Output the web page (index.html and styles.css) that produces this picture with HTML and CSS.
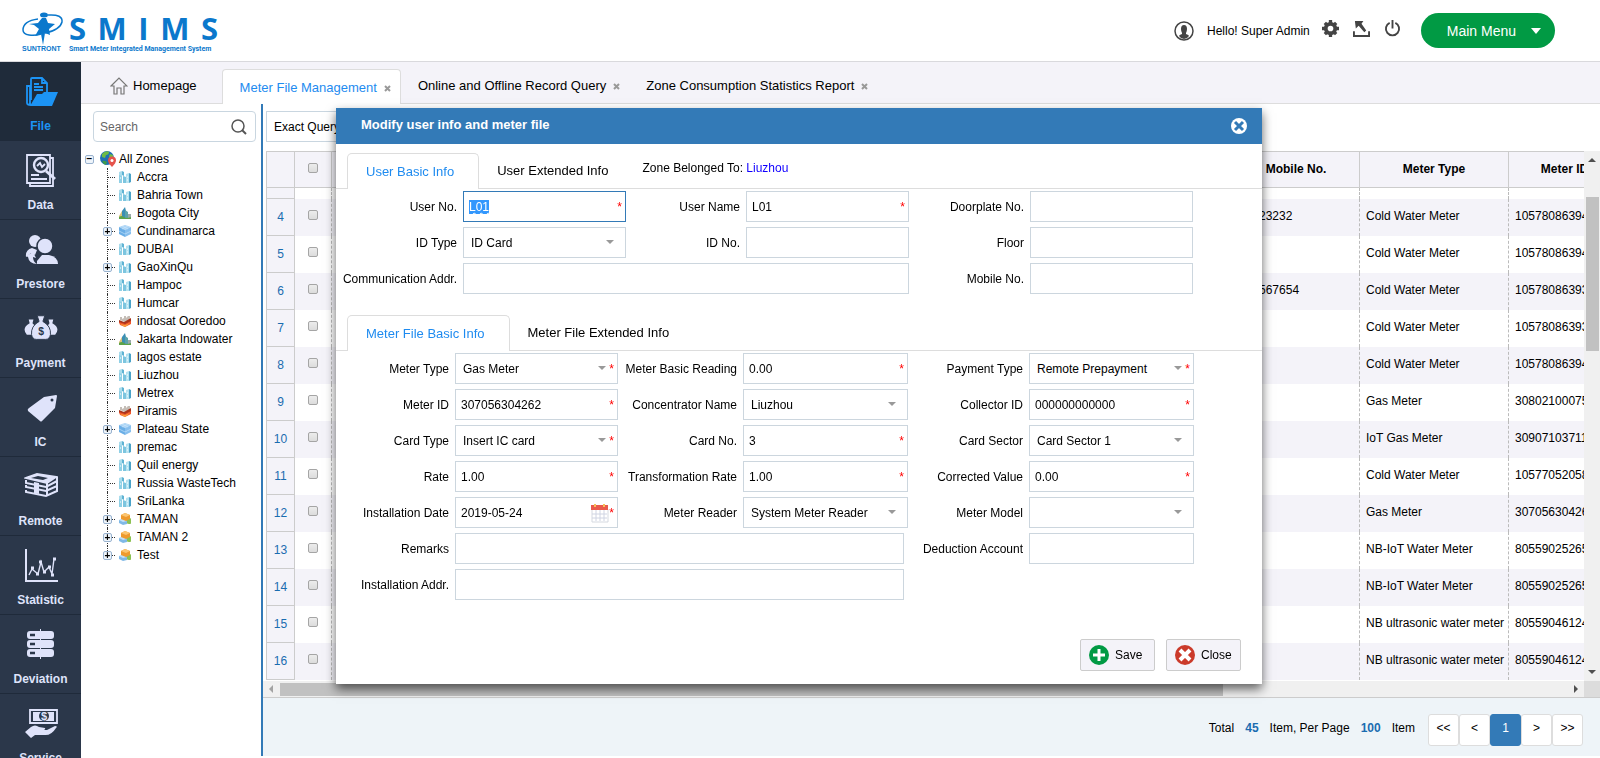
FILE: index.html
```
<!DOCTYPE html>
<html lang="en">
<head>
  <meta charset="UTF-8" />
  <meta name="viewport" content="width=device-width, initial-scale=1" />
  <title>SMIMS - Smart Meter Integrated Management System</title>
  <link rel="stylesheet" href="styles.css">
</head>
<body>

<!-- icon sprite -->
<svg class="sprite" aria-hidden="true">
  <symbol id="i-building" viewBox="0 0 12 12">
    <path d="M0 1l3-1v11l-3 1z" fill="#a9dcec"/><path d="M3 0l2 1v4l-2-1z" fill="#5fb3d3"/>
    <path d="M4 5l3 1v6H4z" fill="#7cc5df"/><path d="M7 3l3-1v10H7z" fill="#b5e2f0"/><path d="M10 2l2 1v8l-2 1z" fill="#4ba3c9"/>
    <path d="M0 4l3 1v7H0z" fill="#8fd0e6"/><path d="M1 7h1M8 6h1M8 9h1" stroke="#fff"/>
  </symbol>
  <symbol id="i-city" viewBox="0 0 12 12">
    <path d="M0 9l3-5 2 7H0z" fill="#d9c27a"/><path d="M3 11V4l3-4 1 4v7z" fill="#3c8fb5"/><path d="M6 11V3l3 2v6z" fill="#5ba3a9"/>
    <path d="M9 7h3v4H9z" fill="#9aa9a9"/><path d="M0 10q3-2 5 0t7 0v2H0z" fill="#5da348"/>
  </symbol>
  <symbol id="i-cube" viewBox="0 0 12 12">
    <path d="M6 0l6 2-6 3-6-3z" fill="#a9d3f5"/><path d="M0 2l6 3v7L0 9z" fill="#6aaee6"/><path d="M12 2L6 5v7l6-3z" fill="#87bfee"/>
    <path d="M3 1l6 3M9 1L3 4M0 6l6 3 6-3" stroke="#cfe7fb" stroke-width=".6" fill="none"/>
  </symbol>
  <symbol id="i-ship" viewBox="0 0 12 12">
    <path d="M1 5V2h2v2l2-1V1h2v2l2-2h2v4L6 7z" fill="#c4bdb6"/><path d="M0 5l5 2 7-4v4l-6 3-6-2z" fill="#a8341c"/>
    <path d="M0 7l6 2 6-3v3l-6 3-5-2z" fill="#f0562a"/><path d="M1 9l5 1 5-2-5 4z" fill="#f7a53c"/>
  </symbol>
  <symbol id="i-group" viewBox="0 0 12 12">
    <circle cx="10" cy="8" r="3" fill="#8cc152"/><path d="M0 7l4-1 4 2v3l-4 1-4-2z" fill="#7fb8e6"/><path d="M0 7l4-1 4 2-4 1z" fill="#c5e1f7"/>
    <path d="M6 0l5 2v4L7 8 2 6V2z" fill="#ee9a2e"/><path d="M6 0l5 2-4 2-5-2z" fill="#fbc570"/>
  </symbol>
  <symbol id="i-globe" viewBox="0 0 16 16">
    <circle cx="7" cy="7" r="7" fill="#1f6fb5"/><path d="M2 3Q6-1 9 1q0 3-3 3l-1 3-3-1z" fill="#6dbb45"/><path d="M10 3l3 1v3l-3 1-1-3z" fill="#6dbb45"/>
    <path d="M2 10q3-1 5 1l-1 3q-3-1-4-4z" fill="#3f9b4c"/>
    <path d="M12 16q-4-4-4-6.500a4 4 0 018 0Q16 12 12 16z" fill="#e5534b"/><circle cx="12" cy="9.500" r="1.500" fill="#fff"/>
  </symbol>
</svg>

<header class="topbar">
  <a class="logo" href="#">
    <span class="brand">
      <svg viewBox="0 0 42 33" fill="#0b78cc" aria-hidden="true">
        <path d="M16 7Q1 9 1 18q0 4 6 5 6 1 12-1M23 21q15-3 17-11 1-8-14-7" fill="none" stroke="#0b78cc" stroke-width="1.500"/>
        <ellipse cx="22" cy="3" rx="4" ry="2.500"/>
        <path d="M20 6h4l2 5 7 1-6 5 1 6-5-2-2 12-2-11-6 2 4-7-5-4-5-1 9-1z"/>
      </svg>
      <span class="company">SUNTRONT</span>
    </span>
    <span class="product">
      <span class="letters"><span>S</span><span>M</span><span>I</span><span>M</span><span>S</span></span>
      <span class="tagline">Smart Meter Integrated Management System</span>
    </span>
  </a>
  <div class="user">
    <svg class="avatar" viewBox="0 0 20 20" aria-hidden="true">
      <circle cx="10" cy="10" r="9" fill="none" stroke="#444" stroke-width="1.500"/>
      <path d="M10 4q3 0 3 4 0 2-1 4v1q3 1 3 2-2 3-5 3t-5-3q0-1 3-2v-1Q7 10 7 8q0-4 3-4z" fill="#444"/>
    </svg>
    <span class="hello">Hello! Super Admin</span>
    <button class="tool" aria-label="Settings">
      <svg viewBox="0 0 18 18"><circle cx="9" cy="9" r="5" fill="none" stroke="#444" stroke-width="4"/><path d="M9 0v4M9 14v4M0 9h4M14 9h4M3 3l2 2M13 13l2 2M15 3l-2 2M5 13l-2 2" stroke="#444" stroke-width="3.500"/></svg>
    </button>
    <button class="tool" aria-label="Export">
      <svg viewBox="0 0 18 18"><path d="M1 12v5h16v-5" fill="none" stroke="#444" stroke-width="2"/><path d="M2 1h9L9 4l5 7-2 2-6-7-3 3z" fill="#444"/></svg>
    </button>
    <button class="tool" aria-label="Log out">
      <svg viewBox="0 0 18 18"><path d="M6 3a7 7 0 106 0M9 0v9" fill="none" stroke="#444" stroke-width="2"/></svg>
    </button>
    <button class="main-menu">Main Menu <span class="caret"></span></button>
  </div>
</header>

<div class="main">
  <nav class="sidebar">
    <a class="item active" href="#">
      <svg viewBox="0 0 34 34"><path d="M6 29V11H3v17q0 2 4 2M7 25V4q0-1 1-1h10l5 5v9M18 3v5h5M10 9h5M10 12h9M10 15h9" fill="none" stroke="#1c94f5" stroke-width="1.800"/><path d="M13 19h5l2-2h14l-6 14H6z" fill="#1c94f5"/></svg>
      File
    </a>
    <a class="item" href="#">
      <svg viewBox="0 0 34 34" fill="none" stroke="#dfe3fa" stroke-width="1.800"><path d="M3 1h23v28H3zM26 4h3v28H6v-3M7 21h8M7 25h16"/><circle cx="17" cy="11" r="7" stroke-width="2.400"/><path d="M22 17l9 8" stroke-width="3"/><path d="M13 12l3-3 2 4 3-3"/></svg>
      Data
    </a>
    <a class="item" href="#">
      <svg viewBox="0 0 34 34" fill="#dfe3fa"><circle cx="11" cy="8" r="6"/><path d="M2 24q-1-7 6-9l5 2-2 5-4-2z"/><circle cx="21" cy="13" r="8" stroke="#2b374a" stroke-width="1.500"/><path d="M13 31v-3l5-6h7q9 2 9 9z"/><path d="M2 23l7-4 3 6-3-1q0 5 4 7-8 0-9-7z"/></svg>
      Prestore
    </a>
    <a class="item" href="#">
      <svg viewBox="0 0 36 34" fill="#dfe3fa"><path d="M5 7h5l-1 4q5 4 4 12H3q-6-7 3-12zM26 7h5l-1 4q9 5 3 12h-9q-1-8 3-12z"/><path d="M14 3h8l-2 6q9 5 8 14-1 5-5 5H13q-4 0-5-5-1-9 8-14z" stroke="#2b374a"/><text x="15" y="23" class="coin">$</text></svg>
      Payment
    </a>
    <a class="item" href="#">
      <svg viewBox="0 0 34 34" fill="#dfe3fa"><path d="M5 17L20 6l12-2q1 0 1 1l-2 12-13 13q-1 1-2 0L4 20q-1-2 1-3z"/><circle cx="28" cy="9" r="1.500" fill="#2b374a"/></svg>
      IC
    </a>
    <a class="item" href="#">
      <svg viewBox="0 0 34 34" fill="none" stroke="#dfe3fa" stroke-width="2"><path d="M2 8l11-4 19 3-9 6z" fill="#dfe3fa"/><path d="M2 10v3l20 4 11-6M2 15v2l20 4 11-5M2 20v2l20 4 11-5V7M23 13v13"/><path d="M7 8l7-2 10 2-5 2z" fill="#2b374a" stroke="none"/><path d="M10 12l5 1v11l-5-1z" fill="#dfe3fa" stroke="none"/></svg>
      Remote
    </a>
    <a class="item" href="#">
      <svg viewBox="0 0 34 34" fill="none" stroke="#dfe3fa" stroke-width="2"><path d="M2 0v32h32"/><path d="M5 26l3-6 6 5 3-12 3 10 5-5 3 7 2-15" stroke-width="1.400"/><path d="M7 19h3M12 25h3M15 13h3M19 23h3M24 18h3M27 26h3M29 10h3" stroke-width="3"/></svg>
      Statistic
    </a>
    <a class="item" href="#">
      <svg viewBox="0 0 34 34" fill="#dfe3fa"><rect x="3" y="3" width="27" height="8" rx="3"/><rect x="3" y="12" width="27" height="8" rx="3"/><rect x="3" y="21" width="27" height="8" rx="3"/><path d="M16 1h1v30h-1z"/><path d="M6 7h5M6 16h5M6 25h5" stroke="#2b374a" stroke-width="2.500"/></svg>
      Deviation
    </a>
    <a class="item" href="#">
      <svg viewBox="0 0 34 34" fill="none" stroke="#dfe3fa"><path d="M6 3h27v13H6z" stroke-width="1.800"/><path d="M9 5h21v9H9z" fill="#dfe3fa" stroke="none"/><circle cx="20" cy="9" r="5" fill="#2b374a" stroke="none"/><text x="17" y="13" class="coin light">$</text><path d="M1 25l6-5q4-3 8 0l6 1q1 2-3 2h5l8-4q3 0 1 2-5 8-12 7H11l-4 3z" fill="#dfe3fa" stroke="none"/></svg>
      Service
    </a>
  </nav>

  <div class="content">
    <div class="tabs">
      <a class="tab home" href="#">
        <svg viewBox="0 0 18 18" fill="none" stroke="#777" stroke-width="1.200"><path d="M1 9l8-8 8 8h-3v8h-3v-6H7v6H4V9z"/></svg>
        Homepage
      </a>
      <a class="tab active" href="#">Meter File Management <svg class="x" viewBox="0 0 7 7"><path d="M1 1l5 5M6 1L1 6"/></svg></a>
      <a class="tab" href="#">Online and Offline Record Query <svg class="x" viewBox="0 0 7 7"><path d="M1 1l5 5M6 1L1 6"/></svg></a>
      <a class="tab" href="#">Zone Consumption Statistics Report <svg class="x" viewBox="0 0 7 7"><path d="M1 1l5 5M6 1L1 6"/></svg></a>
    </div>

    <div class="workspace">
      <aside class="zones">
        <div class="search">
          <input type="text" placeholder="Search" aria-label="Search">
          <svg viewBox="0 0 16 16" fill="none" stroke="#555"><circle cx="7" cy="7" r="6" stroke-width="1.500"/><path d="M11 11l4 4" stroke-width="2"/></svg>
        </div>
        <div class="root">
          <button class="toggle" aria-label="Collapse">−</button>
          <svg class="globe"><use href="#i-globe"/></svg>
          All Zones
        </div>
        <ul class="tree">
          <li><svg><use href="#i-building"/></svg>Accra</li>
          <li><svg><use href="#i-building"/></svg>Bahria Town</li>
          <li><svg><use href="#i-city"/></svg>Bogota City</li>
          <li><button class="toggle" aria-label="Expand">+</button><svg><use href="#i-cube"/></svg>Cundinamarca</li>
          <li><svg><use href="#i-building"/></svg>DUBAI</li>
          <li><button class="toggle" aria-label="Expand">+</button><svg><use href="#i-building"/></svg>GaoXinQu</li>
          <li><svg><use href="#i-building"/></svg>Hampoc</li>
          <li><svg><use href="#i-building"/></svg>Humcar</li>
          <li><svg><use href="#i-ship"/></svg>indosat Ooredoo</li>
          <li><svg><use href="#i-city"/></svg>Jakarta Indowater</li>
          <li><svg><use href="#i-building"/></svg>lagos estate</li>
          <li><svg><use href="#i-building"/></svg>Liuzhou</li>
          <li><svg><use href="#i-building"/></svg>Metrex</li>
          <li><svg><use href="#i-ship"/></svg>Piramis</li>
          <li><button class="toggle" aria-label="Expand">+</button><svg><use href="#i-cube"/></svg>Plateau State</li>
          <li><svg><use href="#i-building"/></svg>premac</li>
          <li><svg><use href="#i-building"/></svg>Quil energy</li>
          <li><svg><use href="#i-building"/></svg>Russia WasteTech</li>
          <li><svg><use href="#i-building"/></svg>SriLanka</li>
          <li><button class="toggle" aria-label="Expand">+</button><svg><use href="#i-group"/></svg>TAMAN</li>
          <li><button class="toggle" aria-label="Expand">+</button><svg><use href="#i-group"/></svg>TAMAN 2</li>
          <li><button class="toggle" aria-label="Expand">+</button><svg><use href="#i-group"/></svg>Test</li>
        </ul>
      </aside>

      <section class="records">
        <div class="query">
          <select aria-label="Query mode"><option>Exact Query</option></select>
        </div>
        <div class="grid-area">
          <div class="grid">
            <table>
              <colgroup><col class="c-num"><col class="c-check"><col class="c-rest"><col class="c-mobile"><col class="c-type"><col class="c-id"></colgroup>
              <thead>
                <tr><th></th><th><input type="checkbox" aria-label="Select all"></th><th></th><th>Mobile No.</th><th>Meter Type</th><th>Meter ID</th></tr>
              </thead>
              <tbody>
                <tr class="cut"><td></td><td></td><td></td><td></td><td></td><td></td></tr>
                <tr><td>4</td><td><input type="checkbox" aria-label="Row 4"></td><td></td><td>13923232</td><td>Cold Water Meter</td><td>10578086394</td></tr>
                <tr><td>5</td><td><input type="checkbox" aria-label="Row 5"></td><td></td><td></td><td>Cold Water Meter</td><td>10578086394</td></tr>
                <tr><td>6</td><td><input type="checkbox" aria-label="Row 6"></td><td></td><td>138567654</td><td>Cold Water Meter</td><td>10578086393</td></tr>
                <tr><td>7</td><td><input type="checkbox" aria-label="Row 7"></td><td></td><td></td><td>Cold Water Meter</td><td>10578086393</td></tr>
                <tr><td>8</td><td><input type="checkbox" aria-label="Row 8"></td><td></td><td></td><td>Cold Water Meter</td><td>10578086394</td></tr>
                <tr><td>9</td><td><input type="checkbox" aria-label="Row 9"></td><td></td><td></td><td>Gas Meter</td><td>30802100075</td></tr>
                <tr><td>10</td><td><input type="checkbox" aria-label="Row 10"></td><td></td><td></td><td>IoT Gas Meter</td><td>30907103711</td></tr>
                <tr><td>11</td><td><input type="checkbox" aria-label="Row 11"></td><td></td><td></td><td>Cold Water Meter</td><td>10577052058</td></tr>
                <tr><td>12</td><td><input type="checkbox" aria-label="Row 12"></td><td></td><td></td><td>Gas Meter</td><td>307056304262</td></tr>
                <tr><td>13</td><td><input type="checkbox" aria-label="Row 13"></td><td></td><td></td><td>NB-IoT Water Meter</td><td>80559025265</td></tr>
                <tr><td>14</td><td><input type="checkbox" aria-label="Row 14"></td><td></td><td></td><td>NB-IoT Water Meter</td><td>80559025265</td></tr>
                <tr><td>15</td><td><input type="checkbox" aria-label="Row 15"></td><td></td><td></td><td>NB ultrasonic water meter</td><td>80559046124</td></tr>
                <tr><td>16</td><td><input type="checkbox" aria-label="Row 16"></td><td></td><td></td><td>NB ultrasonic water meter</td><td>80559046124</td></tr>
              </tbody>
            </table>
          </div>
          <div class="vscroll"><span class="arrow up"></span><span class="thumb"></span><span class="arrow down"></span></div>
        </div>
        <div class="hscroll"><span class="arrow left"></span><span class="thumb"></span><span class="arrow right"></span><span class="corner"></span></div>
        <footer class="pager">
          <span>Total</span><b>45</b><span>Item, Per Page</span><b>100</b><span>Item</span>
          <div class="pages">
            <button>&lt;&lt;</button><button>&lt;</button><button class="current">1</button><button>&gt;</button><button>&gt;&gt;</button>
          </div>
        </footer>
      </section>
    </div>
  </div>
</div>

<div class="overlay">
  <form class="modal" role="dialog" aria-labelledby="modalTitle" onsubmit="return false;">
    <div class="modal-head">
      <h2 id="modalTitle">Modify user info and meter file</h2>
      <button type="button" class="dismiss" aria-label="Close dialog"><svg viewBox="0 0 16 16"><circle cx="8" cy="8" r="8" fill="#fff"/><path d="M4 4l8 8M12 4l-8 8" stroke="#337ab7" stroke-width="3"/></svg></button>
    </div>

    <div class="subtabs">
      <a class="active" href="#">User Basic Info</a>
      <a href="#">User Extended Info</a>
      <span class="zone">Zone Belonged To: <a href="#">Liuzhou</a></span>
    </div>
    <div class="fields user-fields">
      <label for="userNo">User No.</label>
      <div class="field"><input type="text" id="userNo" class="misspelt" value="L01"><i>*</i></div>
      <label for="userName">User Name</label>
      <div class="field"><input type="text" id="userName" value="L01"><i>*</i></div>
      <label for="doorplate">Doorplate No.</label>
      <div class="field"><input type="text" id="doorplate"></div>

      <label for="idType">ID Type</label>
      <div class="field drop"><select id="idType"><option>ID Card</option></select></div>
      <label for="idNo">ID No.</label>
      <div class="field"><input type="text" id="idNo"></div>
      <label for="floor">Floor</label>
      <div class="field"><input type="text" id="floor"></div>

      <label for="commAddr">Communication Addr.</label>
      <div class="field wide"><input type="text" id="commAddr"></div>
      <label for="mobile">Mobile No.</label>
      <div class="field"><input type="text" id="mobile"></div>
    </div>

    <div class="subtabs second">
      <a class="active" href="#">Meter File Basic Info</a>
      <a href="#">Meter File Extended Info</a>
    </div>
    <div class="fields meter-fields">
      <label for="meterType">Meter Type</label>
      <div class="field drop"><select id="meterType"><option>Gas Meter</option></select><i>*</i></div>
      <label for="reading">Meter Basic Reading</label>
      <div class="field"><input type="text" id="reading" value="0.00"><i>*</i></div>
      <label for="payType">Payment Type</label>
      <div class="field drop"><select id="payType"><option>Remote Prepayment</option></select><i>*</i></div>

      <label for="meterId">Meter ID</label>
      <div class="field"><input type="text" id="meterId" value="307056304262"><i>*</i></div>
      <label for="concentrator">Concentrator Name</label>
      <div class="field drop"><select id="concentrator"><option>Liuzhou</option></select></div>
      <label for="collector">Collector ID</label>
      <div class="field"><input type="text" id="collector" value="000000000000"><i>*</i></div>

      <label for="cardType">Card Type</label>
      <div class="field drop"><select id="cardType"><option>Insert IC card</option></select><i>*</i></div>
      <label for="cardNo">Card No.</label>
      <div class="field"><input type="text" id="cardNo" value="3"><i>*</i></div>
      <label for="sector">Card Sector</label>
      <div class="field drop"><select id="sector"><option>Card Sector 1</option></select></div>

      <label for="rate">Rate</label>
      <div class="field"><input type="text" id="rate" value="1.00"><i>*</i></div>
      <label for="transRate">Transformation Rate</label>
      <div class="field"><input type="text" id="transRate" value="1.00"><i>*</i></div>
      <label for="corrected">Corrected Value</label>
      <div class="field"><input type="text" id="corrected" value="0.00"><i>*</i></div>

      <label for="installDate">Installation Date</label>
      <div class="field">
        <input type="text" id="installDate" value="2019-05-24">
        <svg class="calendar" viewBox="0 0 18 19"><path d="M1 5h16v13H1z" fill="#fff" stroke="#d5d9e0"/><path d="M0 1h17v5H0z" fill="#ea5a4c"/><path d="M4 0v3M13 0v3" stroke="#f7c05a" stroke-width="2"/><path d="M1 10h15M1 14h15M5 6v11M9 6v11M13 6v11" stroke="#cfd4e2"/></svg>
        <i>*</i>
      </div>
      <label for="reader">Meter Reader</label>
      <div class="field drop"><select id="reader"><option>System Meter Reader</option></select></div>
      <label for="model">Meter Model</label>
      <div class="field drop"><select id="model"><option></option></select></div>

      <label for="remarks">Remarks</label>
      <div class="field wide"><input type="text" id="remarks"></div>
      <label for="deduction">Deduction Account</label>
      <div class="field"><input type="text" id="deduction"></div>

      <label for="installAddr">Installation Addr.</label>
      <div class="field wide"><input type="text" id="installAddr"></div>
    </div>

    <div class="actions">
      <button type="submit"><svg viewBox="0 0 20 20"><circle cx="10" cy="10" r="10" fill="#019a44"/><path d="M10 4v12M4 10h12" stroke="#fff" stroke-width="3"/></svg>Save</button>
      <button type="button"><svg viewBox="0 0 20 20"><circle cx="10" cy="10" r="10" fill="#cb3a2b"/><path d="M5 5l10 10M15 5L5 15" stroke="#fff" stroke-width="4"/></svg>Close</button>
    </div>
  </form>
</div>

<script>
const userNo = document.getElementById('userNo');
userNo.focus();
userNo.select();
</script>

</body>
</html>
```
FILE: styles.css
```
* {
  box-sizing: border-box;
}
body {
  margin: 0;
  height: 100vh;
  overflow: hidden;
  display: flex;
  flex-direction: column;
  font-family: "Liberation Sans", Arial, sans-serif;
  font-size: 12px;
  color: #000;
  background: #fff;
}
a {
  color: inherit;
  text-decoration: none;
}
button, input, select {
  font: inherit;
  color: inherit;
}
button {
  padding: 0;
  border: none;
  background: none;
  cursor: pointer;
}
svg {
  display: block;
  flex: none;
}
.sprite {
  position: absolute;
  width: 0;
  height: 0;
}

/* top bar */
.topbar {
  flex: none;
  height: 62px;
  padding: 0 45px 0 22px;
  border-bottom: 1px solid #d9d9dd;
  display: flex;
  justify-content: space-between;
  align-items: flex-start;
}
.logo {
  display: flex;
  gap: 5px;
  padding-top: 12px;
  color: #0b78cc;
}
.brand svg {
  width: 42px;
  height: 33px;
}
.company {
  display: block;
  font-size: 7px;
  line-height: 8px;
  font-weight: 900;
}
.product {
  width: 149px;
  font-weight: 700;
}
.letters {
  display: flex;
  justify-content: space-between;
  font-family: "Open Sans", sans-serif;
  font-size: 31px;
  line-height: 32px;
}
.tagline {
  display: block;
  font-family: Roboto, sans-serif;
  font-size: 7px;
  line-height: 10px;
  white-space: nowrap;
}
.user {
  display: flex;
  align-items: center;
  padding-top: 13px;
}
.avatar {
  width: 20px;
  height: 20px;
  margin-right: 13px;
}
.hello {
  margin-right: 12px;
}
.tool {
  margin-right: 14px;
}
.tool svg {
  width: 17px;
  height: 17px;
  margin-bottom: 4px;
}
.main-menu {
  height: 35px;
  margin-left: 6px;
  padding: 0 14px 0 26px;
  border-radius: 18px;
  background: #019a44;
  color: #fff;
  font-size: 14px;
  display: flex;
  align-items: center;
  gap: 15px;
}
.caret {
  border: 5px solid transparent;
  border-top: 6px solid #fff;
  border-bottom: none;
}

/* left menu */
.main {
  flex: 1;
  min-height: 0;
  display: flex;
}
.sidebar {
  width: 81px;
  flex: none;
  overflow: hidden;
  background: #2b374a;
}
.item {
  height: 79px;
  padding-top: 13px;
  border-bottom: 1px solid #1f2a3a;
  display: flex;
  flex-direction: column;
  align-items: center;
  gap: 9px;
  color: #dfe3fa;
  font-weight: 700;
  line-height: 16px;
}
.item svg {
  width: 34px;
  height: 34px;
}
.item.active {
  background: #1f2b3a;
  color: #1c94f5;
}
.coin {
  font-size: 11px;
  font-weight: 700;
  fill: #2b374a;
  stroke: none;
}
.coin.light {
  fill: #dfe3fa;
}

/* page tabs */
.content {
  flex: 1;
  min-width: 0;
  padding-bottom: 2px;
  display: flex;
  flex-direction: column;
}
.tabs {
  flex: none;
  height: 42px;
  background: #f4f3f9;
  border-bottom: 1px solid #ddd;
  display: flex;
  align-items: flex-end;
}
.tab {
  height: 35px;
  margin-bottom: -1px;
  padding: 0 9px 2px 17px;
  display: flex;
  align-items: center;
  gap: 7px;
  font-size: 13px;
}
.tab.home {
  gap: 5px;
  padding: 0 25px 2px 29px;
}
.tab.home svg {
  width: 18px;
  height: 18px;
}
.tab.active {
  padding-bottom: 0;
  background: #fff;
  border: 1px solid #ddd;
  border-bottom: none;
  border-radius: 4px 4px 0 0;
  color: #1e8bf0;
}
.tab .x {
  width: 7px;
  height: 7px;
  margin-top: 2px;
  stroke: #999;
  stroke-width: 2;
}

/* zone tree */
.workspace {
  flex: 1;
  min-height: 0;
  display: flex;
}
.zones {
  width: 182px;
  flex: none;
  padding: 7px 5px 0 12px;
  border-right: 2px solid #337ab7;
}
.zones .search {
  height: 31px;
  padding: 0 8px 0 6px;
  border: 1px solid #c9d6e0;
  border-radius: 4px;
  display: flex;
  align-items: center;
}
.search input {
  flex: 1;
  min-width: 0;
  padding: 0;
  border: none;
  outline: none;
}
.search input::placeholder {
  color: #666;
}
.search svg {
  width: 16px;
  height: 16px;
}
.root {
  height: 18px;
  margin: 8px 0 0 -8px;
  display: flex;
  align-items: center;
  gap: 3px;
}
.root .toggle {
  margin-right: 3px;
}
.globe {
  width: 16px;
  height: 16px;
}
.toggle {
  width: 9px;
  height: 9px;
  border: 1px solid #9ab3cf;
  border-radius: 2px;
  background: #eef4fa;
  display: flex;
  justify-content: center;
  align-items: center;
  font-size: 10px;
  line-height: 8px;
  font-weight: 700;
}
.tree {
  margin: 0;
  padding: 0 0 0 14px;
  list-style: none;
}
.tree li {
  position: relative;
  height: 18px;
  padding-left: 12px;
  display: flex;
  align-items: center;
  gap: 6px;
  white-space: nowrap;
}
.tree li::before {
  content: "";
  position: absolute;
  left: 0;
  top: 0;
  height: 18px;
  border-left: 1px dotted #333;
}
.tree li:last-child::before {
  height: 9px;
}
.tree li::after {
  content: "";
  position: absolute;
  left: 0;
  top: 9px;
  width: 8px;
  border-top: 1px dotted #333;
}
.tree li .toggle {
  position: absolute;
  left: -4px;
  top: 5px;
  z-index: 1;
}
.tree li svg {
  width: 12px;
  height: 12px;
}

/* records grid */
.records {
  flex: 1;
  min-width: 0;
  display: flex;
  flex-direction: column;
}
.query {
  flex: none;
  height: 47px;
  padding: 7px 3px;
}
.query select {
  appearance: none;
  width: 160px;
  height: 31px;
  padding: 0 7px;
  border: 1px solid #c9d6e0;
  background: #fff;
}
.grid-area {
  flex: 1;
  min-height: 0;
  display: flex;
}
.grid {
  flex: 1;
  min-width: 0;
  margin-left: 3px;
  overflow: hidden;
}
table {
  width: 1355px;
  table-layout: fixed;
  border-collapse: separate;
  border-spacing: 0;
}
.c-num { width: 29px; }
.c-check { width: 37px; }
.c-mobile { width: 127px; }
.c-type { width: 149px; }
.c-id { width: 112px; }
th {
  height: 37px;
  padding: 0 0 2px;
  background: #f4f3f9;
  border: solid #ccc;
  border-width: 1px 1px 1px 0;
}
td {
  height: 37px;
  padding: 0 0 4px 6px;
  border-right: 1px dashed #bbb;
  white-space: nowrap;
}
th:first-child, td:first-child {
  border-left: 1px solid #ccc;
}
td:first-child {
  padding: 0;
  border-right: 1px solid #ccc;
  border-bottom: 1px solid #ccc;
  background: #f4f3f9;
  color: #1a6cb0;
  text-align: center;
}
td:nth-child(2) {
  padding: 0 0 4px;
  text-align: center;
}
tr:nth-child(even) td {
  background: #f4f3f9;
}
.cut td {
  height: 11px;
}
td input, th input {
  appearance: none;
  width: 10px;
  height: 10px;
  margin: 0;
  border: 1px solid #a5a5a5;
  border-radius: 2px;
  background: linear-gradient(#ececec, #dcdcdc);
}

/* scroll tracks */
.vscroll {
  width: 16px;
  flex: none;
  background: #f0f0f0;
  display: flex;
  flex-direction: column;
  align-items: center;
  padding: 7px 0;
}
.vscroll .thumb {
  width: 13px;
  height: 154px;
  margin: 35px 0 auto;
  background: #c1c1c1;
}
.hscroll {
  flex: none;
  height: 16px;
  padding-left: 6px;
  background: #f0f0f0;
  display: flex;
  align-items: center;
}
.hscroll .thumb {
  width: 943px;
  height: 13px;
  margin: 0 auto 0 7px;
  background: #c1c1c1;
}
.corner {
  width: 16px;
  height: 16px;
  margin-left: 6px;
  background: #dcdcdc;
}
.arrow {
  border: 4px solid transparent;
}
.up { border-top: none; border-bottom-color: #505050; }
.down { border-bottom: none; border-top-color: #505050; }
.left { border-left: none; border-right-color: #a3a3a3; }
.right { border-right: none; border-left-color: #505050; }

/* pager */
.pager {
  flex: none;
  height: 59px;
  padding: 2px 17px 0 0;
  border-top: 1px solid #ccc;
  background: #eef4f8;
  display: flex;
  justify-content: flex-end;
  align-items: center;
  gap: 11px;
}
.pager b {
  color: #1a6cb0;
}
.pages {
  display: flex;
  padding-top: 4px;
  margin-left: 2px;
}
.pages button {
  width: 31px;
  height: 32px;
  padding-bottom: 4px;
  border: 1px solid #ddd;
  border-radius: 3px;
  background: #fff;
}
.pages .current {
  background: #337ab7;
  border-color: #337ab7;
  color: #fff;
}

/* dialog */
.overlay {
  position: fixed;
  inset: 0;
  padding: 108px 2px 0 0;
  display: flex;
  justify-content: center;
  align-items: flex-start;
}
.modal {
  width: 926px;
  max-width: 100%;
  background: #fff;
  box-shadow: 0 5px 10px rgba(0, 0, 0, 0.6);
}
.modal-head {
  height: 36px;
  padding: 0 15px 0 25px;
  background: #337ab7;
  color: #fff;
  display: flex;
  justify-content: space-between;
  align-items: center;
}
.modal-head h2 {
  margin: 0 0 3px;
  font-size: 13px;
}
.dismiss svg {
  width: 16px;
  height: 16px;
}
.subtabs {
  margin-top: 9px;
  padding-left: 11px;
  border-bottom: 1px solid #ddd;
  display: flex;
  font-size: 13px;
}
.subtabs.second {
  margin-top: 21px;
}
.subtabs > a {
  height: 35px;
  padding: 0 18px;
  line-height: 36px;
}
.subtabs > .active {
  height: 36px;
  margin-bottom: -1px;
  padding: 0 24px 0 18px;
  border: 1px solid #ddd;
  border-bottom: none;
  border-radius: 5px 5px 0 0;
  background: #fff;
  color: #1e8bf0;
}
.zone {
  margin-left: 16px;
  font-size: 12px;
  line-height: 30px;
}
.zone a {
  color: #10f;
}
.fields {
  display: grid;
  gap: 5px 6px;
  align-items: center;
  padding-top: 2px;
}
.user-fields {
  grid-template-columns: 121px 1fr 108px 1fr 109px 1fr;
  padding-right: 69px;
}
.meter-fields {
  grid-template-columns: 113px 163fr 113px 165fr 109px 165fr;
  padding-right: 68px;
}
.fields label {
  text-align: right;
  white-space: nowrap;
}
.field {
  position: relative;
  height: 31px;
}
.field.wide {
  grid-column: span 3;
}
.meter-fields .wide {
  margin-right: 4px;
}
.field input, .field select {
  appearance: none;
  display: block;
  width: 100%;
  height: 31px;
  padding: 0 5px;
  border: 1px solid #ccd6de;
  border-radius: 0;
  background: #fff;
  outline: none;
}
.field select {
  padding: 0 7px;
}
.field input:focus {
  border-color: #337ab7;
}
.field input::selection {
  background: #3297fd;
  color: #fff;
}
.field .misspelt {
  text-decoration: underline wavy #d0202a 1px;
}
.field i {
  position: absolute;
  right: 4px;
  top: 9px;
  color: #f00;
  font-style: normal;
}
.drop::after {
  content: "";
  position: absolute;
  right: 12px;
  top: 13px;
  border: 4px solid transparent;
  border-top-color: #999;
  border-bottom: none;
}
.calendar {
  position: absolute;
  right: 9px;
  top: 7px;
  width: 18px;
  height: 19px;
}
.actions {
  display: flex;
  justify-content: flex-end;
  gap: 11px;
  padding: 39px 21px 13px;
}
.actions button {
  min-width: 75px;
  height: 32px;
  padding: 0 8px;
  border: 1px solid #ccc;
  border-radius: 2px;
  background: #f4f3f9;
  display: flex;
  align-items: center;
  gap: 6px;
}
.actions svg {
  width: 20px;
  height: 20px;
}
```
